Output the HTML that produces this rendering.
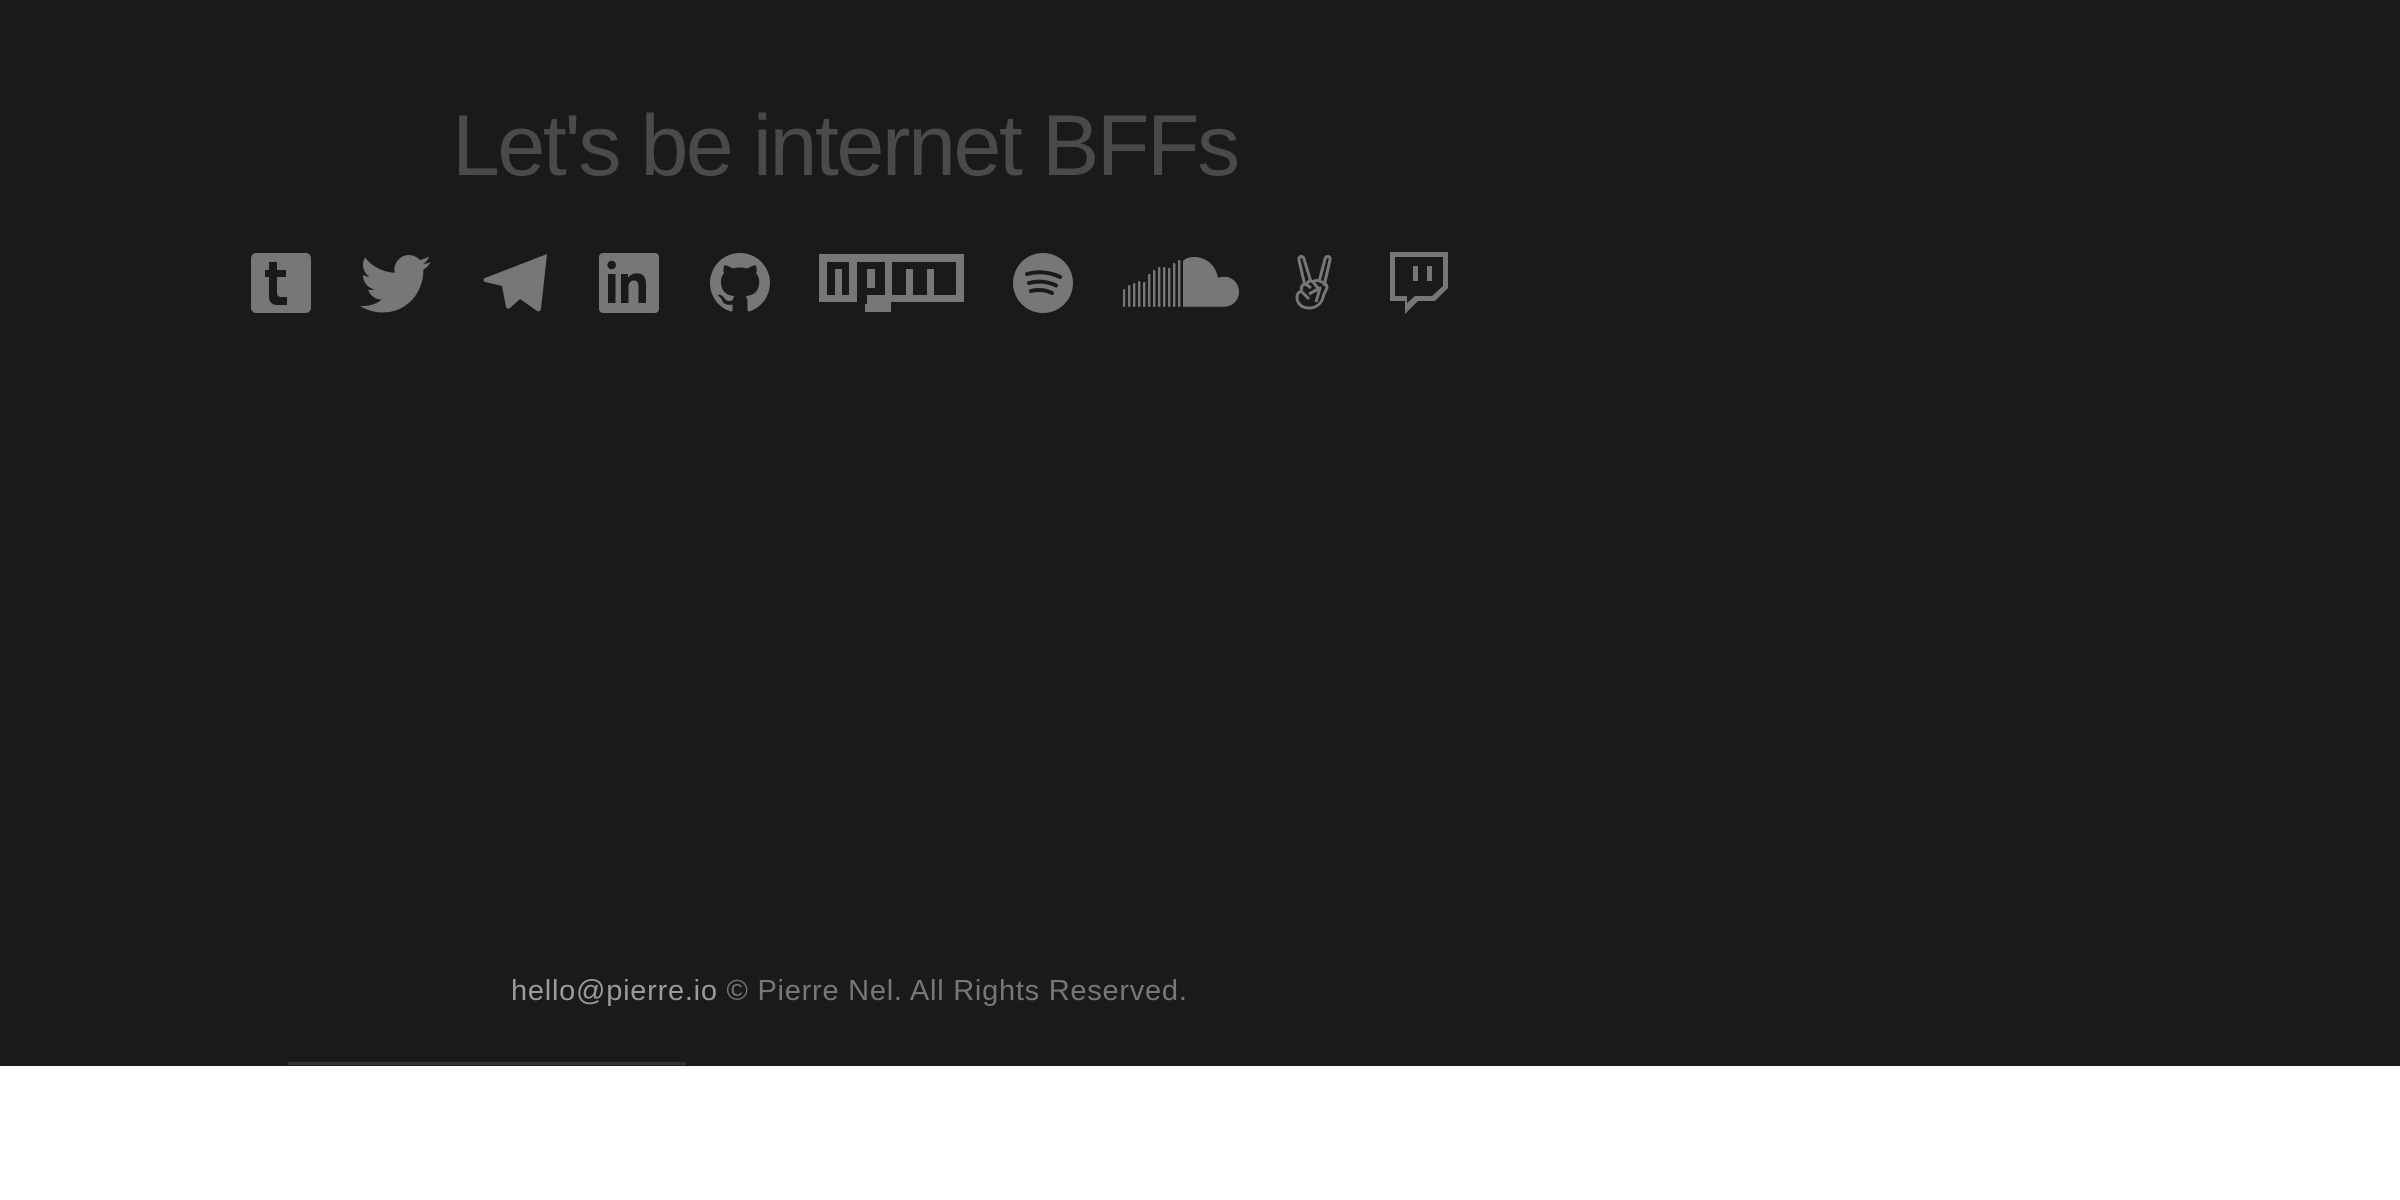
<!DOCTYPE html>
<html><head><meta charset="utf-8"><style>
html,body{margin:0;padding:0;width:2400px;height:1200px;background:#fff;overflow:hidden}
.dark{position:absolute;left:0;top:0;width:2400px;height:1066px;background:#1a1a1a}
.bar{position:absolute;left:288px;top:1062px;width:398px;height:3px;background:#333}
h1{position:absolute;left:452px;top:103px;margin:0;font:400 86px/1 "Liberation Sans",sans-serif;color:#4a4a4a;letter-spacing:-2.4px;white-space:nowrap}
.ft{position:absolute;left:511px;top:974px;font:29px/1.2 "Liberation Sans",sans-serif;color:#777;white-space:nowrap;letter-spacing:0.75px}
.ft span{color:#9a9a9a}
svg{position:absolute;top:252px}
</style></head><body>
<div class="dark"></div><div class="bar"></div>
<h1>Let's be internet BFFs</h1>
<svg style="left:251px" width="60" height="62" viewBox="0 0 60 62"><rect x="0" y="1" width="60" height="60" rx="5" fill="#777"/><path d="M18 10h8v8h9v7h-9v16c0 3 2 4 4 4h6v8h-10c-5 0-8-3-8-8V25h-4v-7h4z" fill="#1a1a1a"/></svg>
<svg style="left:360px" width="72" height="62" viewBox="0 0 72 62"><path d="M70 7c-2.5 1.2-5 1.8-8 2 3-1.7 5-4.3 6-7.5-2.8 1.6-6 2.8-9 3.5C56 2 52 0 48 0c-8 0-14.5 6.5-14.5 14.5 0 1 0 2.3.4 3.3C22 17.2 11 11.5 4 2.5c-1.3 2.2-2 4.6-2 7.3 0 5 2.6 9.5 6.5 12-2.4 0-4.6-.8-6.5-1.8v.2c0 7 5 12.8 11.6 14.2-1.2.3-2.5.5-3.8.5-.9 0-1.8-.1-2.7-.3 1.8 5.8 7.2 10 13.6 10C15.7 48.6 9.3 51 2.3 51c-1.2 0-2.4 0-3.5-.2C5.3 55 13 57.5 21.3 57.5c26.5 0 41-22 41-41v-1.9C65.5 12.8 67.8 10.2 70 7z" fill="#777" transform="translate(1,3)"/></svg>
<svg style="left:483px" width="66" height="62" viewBox="0 0 66 62"><path d="M64 2 2 26c-2 1-2 3 0 4l17 4 4 21c1 2 3 2 4 1l10-9 17 12c2 1 3 0 4-2z" fill="#777"/></svg>
<svg style="left:599px" width="60" height="62" viewBox="0 0 60 62"><rect x="0" y="1" width="60" height="60" rx="4" fill="#777"/><rect x="9" y="22" width="7.5" height="29" fill="#1a1a1a"/><circle cx="12.7" cy="13" r="4.3" fill="#1a1a1a"/><path d="M22 22h7v4c2-3 5-4.6 9-4.6 7 0 9 4.5 9 11V51h-7.5V35c0-4-1-6.5-4.5-6.5s-5.5 2.5-5.5 6.5v16H22z" fill="#1a1a1a"/></svg>
<svg style="left:710px" width="60" height="62" viewBox="0 0 16 16"><path fill="#777" d="M8 0C3.58 0 0 3.58 0 8c0 3.54 2.29 6.53 5.47 7.59.4.07.55-.17.55-.38 0-.19-.01-.82-.01-1.49-2.01.37-2.53-.49-2.69-.94-.09-.23-.48-.94-.82-1.13-.28-.15-.68-.52-.01-.53.63-.01 1.08.58 1.23.82.72 1.21 1.87.87 2.33.66.07-.52.28-.87.51-1.07-1.78-.2-3.64-.89-3.64-3.95 0-.87.31-1.59.82-2.15-.08-.2-.36-1.02.08-2.12 0 0 .67-.21 2.2.82.64-.18 1.32-.27 2-.27.68 0 1.36.09 2 .27 1.53-1.04 2.2-.82 2.2-.82.44 1.1.16 1.92.08 2.12.51.56.82 1.27.82 2.15 0 3.07-1.87 3.75-3.65 3.95.29.25.54.73.54 1.48 0 1.07-.01 1.93-.01 2.2 0 .21.15.46.55.38A8.013 8.013 0 0016 8c0-4.42-3.58-8-8-8z"/></svg>
<svg style="left:819px" width="145" height="62" viewBox="0 0 145 62"><path fill="#777" d="M0 2h145v48H72v10H46V50H0z"/><g fill="#1a1a1a"><rect x="8" y="10" width="22" height="33"/><rect x="38" y="10" width="28" height="33"/><rect x="38" y="43" width="10" height="9"/><rect x="73" y="10" width="64" height="33"/></g><g fill="#777"><rect x="16" y="17" width="7" height="26"/><rect x="48" y="17" width="8" height="19"/><rect x="87" y="17" width="7" height="26"/><rect x="108" y="17" width="7" height="26"/></g></svg>
<svg style="left:1013px" width="60" height="62" viewBox="0 0 60 62"><ellipse cx="30" cy="31" rx="30" ry="30" fill="#777"/><path d="M14 22c11-3 23-2 33 3M16 31c9-2.5 19-1.5 27 2.5M18 39c7-2 15-1 21 2" stroke="#1a1a1a" stroke-width="4" stroke-linecap="round" fill="none"/></svg>
<svg style="left:1123px" width="122" height="62" viewBox="0 0 122 62"><g fill="#777"><rect x="0" y="37" width="2.2" height="18" rx="1"/><rect x="5" y="33" width="2.4" height="22" rx="1"/><rect x="10" y="31" width="2.4" height="24" rx="1"/><rect x="15" y="29" width="2.4" height="26" rx="1"/><rect x="20" y="30" width="2.4" height="25" rx="1"/><rect x="25" y="22" width="2.4" height="33" rx="1"/><rect x="30" y="18" width="2.4" height="37" rx="1"/><rect x="35" y="15" width="2.4" height="40" rx="1"/><rect x="40" y="15" width="2.4" height="40" rx="1"/><rect x="45" y="16" width="2.4" height="39" rx="1"/><rect x="50" y="11" width="2.4" height="44" rx="1"/><rect x="55" y="8" width="2.4" height="47" rx="1"/><path d="M60 9c3-3 7-4 11-4 13 0 22 9 24 21 2-.8 4-1.2 6-1.2 8.5 0 15 6.5 15 15s-6.5 15-15 15H60z"/></g></svg>
<svg style="left:1293px" width="46" height="62" viewBox="0 0 46 62"><g fill="none" stroke="#777" stroke-width="3" stroke-linejoin="round"><path d="M12 34 6 8c-1-4 4-5 5-1l7 23M26 30l6-23c1-4 6-3 5 1l-6 26"/><path d="M9 38c-2-4 2-7 5-5l4 3M14 33c0-4 4-5 6-3l5 6M20 30c2-2 6-2 8 0 3 0 6 2 6 6l-3 6c-2 10-8 14-15 14S4 52 4 45c0-3 2-5 4-6l8 8"/><path d="M16 42l11-6-4 14"/></g></svg>
<svg style="left:1390px" width="58" height="62" viewBox="0 0 58 62"><path d="M0 0h58v36L45 49H28L15 62V49H0z" fill="#777"/><path d="M5 5h48v29L42 44H25l-8 7v-7H5z" fill="#1a1a1a"/><rect x="23" y="14" width="5" height="15" fill="#777"/><rect x="37" y="14" width="5" height="15" fill="#777"/></svg>
<div class="ft"><span>hello@pierre.io</span> © Pierre Nel. All Rights Reserved.</div>
</body></html>
